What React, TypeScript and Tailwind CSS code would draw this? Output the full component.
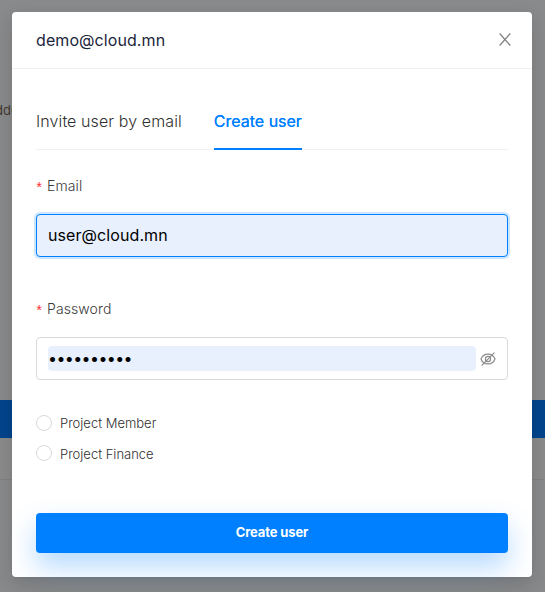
import type { ReactNode } from "react";

function Label({ children }: { children: ReactNode }) {
  return (
    <div className="flex h-[22px] items-center text-sm font-light tracking-[0.1px] text-[#3a3a3a]">
      <span className="-ml-px mr-1 w-2 pt-[5px] font-['Liberation_Mono',monospace] text-[14px] font-normal leading-none tracking-normal text-[#ff2d30]">*</span>
      {children}
    </div>
  );
}

function Role({ children }: { children: ReactNode }) {
  return (
    <label className="group flex h-[30px] items-start text-[13px] font-light leading-4 text-[#303030]">
      <span className="mr-2 size-4 rounded-full border border-[#d9d9d9] bg-white" />
      <span className="group-last:pt-px">{children}</span>
    </label>
  );
}

function HiddenIcon() {
  return (
    <svg className="ml-1 size-4" viewBox="0 0 16 16" fill="none" stroke="#8c8c8c" strokeWidth="1.2">
      <path d="M1 8C2.2 4.9 4.7 3.1 8 3.1s5.8 1.8 7 4.9c-1.2 3.1-3.7 4.9-7 4.9S2.2 11.1 1 8Z" />
      <circle cx="8" cy="8" r="2.6" />
      <path d="M1.6 14.6 14.4 1.6" />
    </svg>
  );
}

export default function App() {
  return (
    <div className="relative h-[592px] w-[545px] overflow-hidden bg-[#8a8b8c] font-['Inter',sans-serif]">
      <div className="absolute inset-0 flex flex-col">
        <div className="h-[400px] pt-[100px]">
          <div className="-ml-[5px] w-10 text-[13px] leading-5 text-[#433a30]">ddC</div>
        </div>
        <div className="h-[38px] bg-[#00468c]" />
        <div className="h-[42px] border-b border-[#848280] bg-[#8c8c8c]" />
      </div>

      <div className="relative mx-3 mt-3 h-[565px] w-[520px] rounded-[4px] bg-white shadow-[0_3px_6px_-4px_rgba(0,0,0,0.12),0_6px_16px_0_rgba(0,0,0,0.08),0_9px_28px_8px_rgba(0,0,0,0.05)]">
        <div className="flex h-[57px] items-center justify-between border-b border-[#f0f0f0] pl-6 pr-[21px]">
          <h1 className="text-base tracking-[0.08px] text-[#1b253b]">demo@cloud.mn</h1>
          <svg className="mb-px h-[13px] w-3" viewBox="0 0 12 13" fill="none" stroke="#858585" strokeWidth="1.35">
            <path d="M.7 .5 11.3 12.5M11.3 .5 .7 12.5" />
          </svg>
        </div>

        <div className="flex flex-col px-6">
          <div className="mt-6 flex h-[57px] gap-8 border-b border-[#f0f0f0] text-base leading-[57px]">
            <div className="font-light tracking-[0.1px] text-[#303030]">Invite user by email</div>
            <div className="h-[57px] border-b-2 border-[#0080ff] text-[#0080ff] [text-shadow:0_0_0.25px_currentColor]">Create user</div>
          </div>

          <div className="mt-[25px]">
            <Label>Email</Label>
          </div>
          <div className="mt-[17px] flex h-[43px] items-center rounded-[4px] border border-[#0080ff] bg-[#e8f0fe] px-[11px] pb-0.5 text-base tracking-[0.08px] text-black shadow-[0_0_0_2px_rgba(0,128,255,0.2)]">
            user@cloud.mn
          </div>

          <div className="mt-[41px]">
            <Label>Password</Label>
          </div>
          <div className="mt-[17px] flex h-[43px] items-center rounded-[4px] border border-[#d9d9d9] pl-[11px] pr-[11px]">
            <div className="flex h-[25px] flex-1 items-center rounded-[4px] bg-[#e8f0fe] pb-0.5 text-base tracking-[-0.6px] text-black">••••••••••</div>
            <HiddenIcon />
          </div>

          <div className="mt-[35px] flex flex-col">
            <Role>Project Member</Role>
            <Role>Project Finance</Role>
          </div>

          <button className="mt-[38px] h-10 rounded-[4px] bg-[#0080ff] text-[13px] font-bold tracking-[-0.12px] text-white shadow-[0_14px_28px_rgba(0,128,255,0.29)]">
            Create user
          </button>
        </div>
      </div>
    </div>
  );
}
